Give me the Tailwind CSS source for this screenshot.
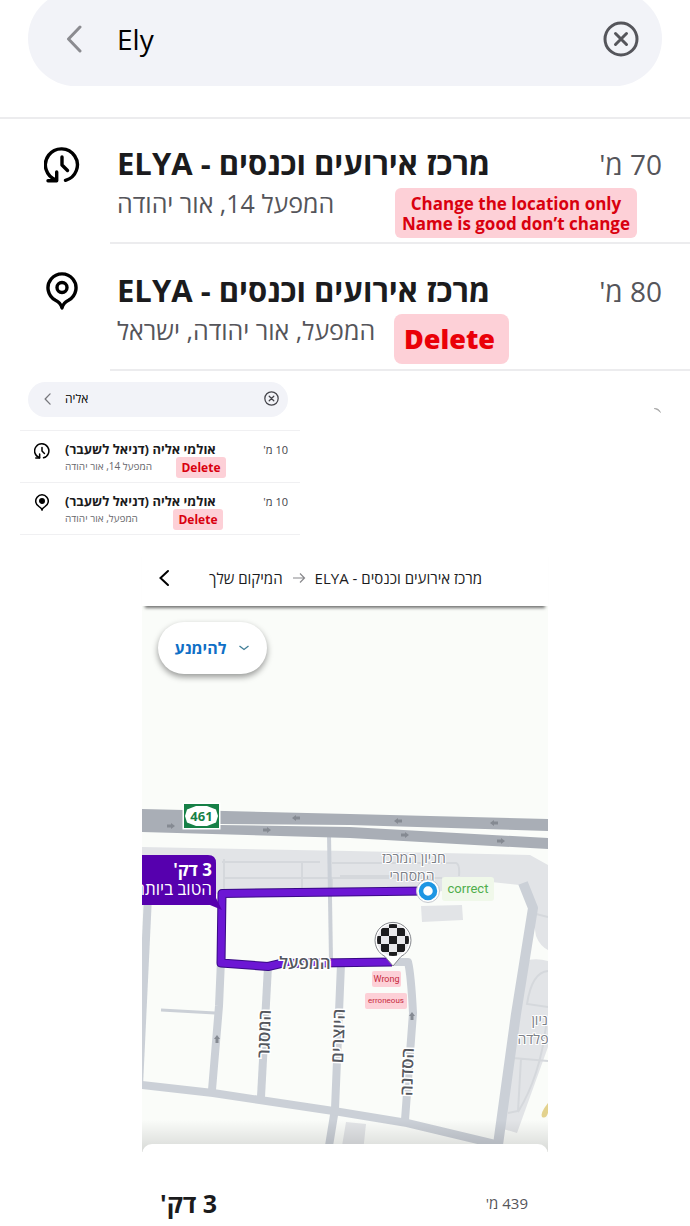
<!DOCTYPE html>
<html lang="he">
<head>
    <meta charset="UTF-8">
    <meta name="viewport" content="width=device-width, initial-scale=1.0">
    <title>ELYA - מרכז אירועים וכנסים</title>
    <script src="https://cdn.jsdelivr.net/npm/@tailwindcss/browser@4"></script>
</head>
<body class="bg-white font-['Open_Sans','Noto_Sans',sans-serif] text-[#1b1b1d] overflow-x-hidden">

    <!-- Shared icons -->
    <svg class="hidden" aria-hidden="true">
        <symbol id="icon-history" viewBox="0 0 36 36">
            <g fill="none" stroke="currentColor" stroke-width="3.4" stroke-linecap="round" stroke-linejoin="round">
                <path d="M12.300 33A16 16 0 1 1 21.500 33.300"/>
                <path d="M4 33.800H12.700V25"/>
                <path d="M18 10V18L23.500 23.500"/>
            </g>
        </symbol>
        <symbol id="icon-clear" viewBox="0 0 36 36">
            <g fill="none" stroke="currentColor" stroke-width="3" stroke-linecap="round">
                <circle cx="18" cy="18" r="16"/>
                <path d="M12.500 12.500L23.500 23.500M23.500 12.500L12.500 23.500"/>
            </g>
        </symbol>
        <symbol id="icon-back" viewBox="0 0 16 28">
            <path d="M14 2L2.500 14L14 26" fill="none" stroke="currentColor" stroke-width="3" stroke-linecap="round" stroke-linejoin="round"/>
        </symbol>
    </svg>

    <!-- Main search -->
    <header class="border-b-2 border-[#ececee] pb-[31px]">
        <div class="-mt-[9px] mx-7 h-[95px] rounded-full bg-[#f2f3f8] flex items-center pl-[38px] pr-[23px]">
            <button type="button" aria-label="חזרה" class="text-[#8b8b90]">
                <svg class="w-4 h-7"><use href="#icon-back"/></svg>
            </button>
            <input type="text" aria-label="חיפוש" value="Ely" class="flex-1 min-w-0 ml-[35px] bg-transparent outline-none text-[28px] leading-9 text-black">
            <button type="button" aria-label="ניקוי" class="text-[#55555b]">
                <svg class="size-9"><use href="#icon-clear"/></svg>
            </button>
        </div>
    </header>

    <main>
        <ul>
            <li class="relative flex h-[125px]">
                <svg class="size-9 mt-7 ml-11 shrink-0 text-black"><use href="#icon-history"/></svg>
                <div class="ml-[30px] flex-1 border-b-2 border-[#ececee] pl-[7px] pr-7 pt-6">
                    <div class="flex items-baseline justify-between whitespace-nowrap">
                        <h2 dir="rtl" class="text-[31px] leading-10 font-bold">מרכז אירועים וכנסים - ELYA</h2>
                        <span dir="rtl" class="text-[28px] leading-10 text-[#55555a]">70 מ'</span>
                    </div>
                    <p dir="rtl" class="text-left text-[25px] leading-[38px] text-[#55555a]">המפעל 14, אור יהודה</p>
                </div>
                <p class="absolute left-[395px] top-[69px] w-[242px] rounded-md bg-[#fdd0d7] pt-[6px] pb-1 text-center text-[17px] leading-5 font-bold text-[#d9000f] whitespace-nowrap">Change the location only<br>Name is good don’t change</p>
            </li>
            <li class="relative flex h-[127px]">
                <svg viewBox="0 0 32 38" class="w-8 h-[38px] mt-7 ml-[46px] shrink-0 text-black" fill="none" stroke="currentColor" stroke-width="3.4" stroke-linejoin="round">
                    <path d="M16 36C15 31.500 13 30 9.500 28.300A14 14 0 1 1 22.500 28.300C19 30 17 31.500 16 36Z"/>
                    <circle cx="16" cy="15.500" r="5"/>
                </svg>
                <div class="ml-8 flex-1 border-b-2 border-[#ececee] pl-[7px] pr-7 pt-[26px]">
                    <div class="flex items-baseline justify-between whitespace-nowrap">
                        <h2 dir="rtl" class="text-[31px] leading-10 font-bold">מרכז אירועים וכנסים - ELYA</h2>
                        <span dir="rtl" class="text-[28px] leading-10 text-[#55555a]">80 מ'</span>
                    </div>
                    <p dir="rtl" class="text-left text-[25px] leading-[38px] text-[#55555a]">המפעל, אור יהודה, ישראל</p>
                </div>
                <p class="absolute left-[394px] top-[70px] w-[115px] rounded-lg bg-[#fdd0d7] py-[5px] pr-1 text-center text-[27px] leading-10 font-extrabold text-[#ea0008]">Delete</p>
            </li>
        </ul>

        <!-- Second search -->
        <section class="relative pt-[11px]">
            <svg viewBox="0 0 10 8" class="absolute right-[28px] top-9 w-[10px] h-2"><path d="M2 1.500C5 1 7.500 2.500 8.500 5.500C6.500 3.500 5 2.200 2 1.500Z" fill="#999" stroke="#aaa" stroke-width=".7"/></svg>
            <div class="ml-5 w-[280px] text-[#1b1b1d]">
                <div class="mx-2 mr-3 h-[35px] rounded-full bg-[#f2f3f8] flex items-center pl-4 pr-[9px] pb-[2px]">
                    <button type="button" aria-label="חזרה" class="text-[#77777c]">
                        <svg class="w-[7px] h-3 block"><use href="#icon-back"/></svg>
                    </button>
                    <input type="text" aria-label="חיפוש" value="אליה" class="flex-1 min-w-0 ml-[14px] bg-transparent outline-none text-xs text-black">
                    <button type="button" aria-label="ניקוי" class="text-[#44444a]">
                        <svg class="size-[15px] block"><use href="#icon-clear"/></svg>
                    </button>
                </div>
                <ul class="mt-[13px] border-t border-[#f0f0f2]">
                    <li class="relative flex h-[52px] border-b border-[#f0f0f2] pl-[14px] pr-3 pt-[9px]">
                        <svg class="size-4 mt-[3px] shrink-0 text-black"><use href="#icon-history"/></svg>
                        <div class="ml-[15px] flex-1">
                            <div class="flex items-baseline justify-between whitespace-nowrap">
                                <h3 dir="rtl" class="text-[13px] leading-[18px] font-bold">אולמי אליה (דניאל לשעבר)</h3>
                                <span dir="rtl" class="text-[11px] leading-[18px] text-[#44444a]">10 מ'</span>
                            </div>
                            <p dir="rtl" class="text-left text-[10px] leading-[14px] text-[#66666b]">המפעל 14, אור יהודה</p>
                        </div>
                        <span class="absolute left-[156px] top-[26px] w-[50px] rounded-[3px] bg-[#fdd0d7] text-center text-xs leading-[21px] font-bold text-[#d9000f]">Delete</span>
                    </li>
                    <li class="relative flex h-[52px] border-b border-[#f0f0f2] pl-[14px] pr-3 pt-[9px]">
                        <svg viewBox="0 0 32 38" class="w-4 h-[17px] mt-[2px] shrink-0 text-black" fill="none" stroke="currentColor" stroke-width="3.400" stroke-linejoin="round">
                            <path d="M16 36C15 31.500 13 30 9.500 28.300A14 14 0 1 1 22.500 28.300C19 30 17 31.500 16 36Z"/>
                            <circle cx="16" cy="15.500" r="5" fill="currentColor"/>
                        </svg>
                        <div class="ml-[15px] flex-1">
                            <div class="flex items-baseline justify-between whitespace-nowrap">
                                <h3 dir="rtl" class="text-[13px] leading-[18px] font-bold">אולמי אליה (דניאל לשעבר)</h3>
                                <span dir="rtl" class="text-[11px] leading-[18px] text-[#44444a]">10 מ'</span>
                            </div>
                            <p dir="rtl" class="text-left text-[10px] leading-[14px] text-[#66666b]">המפעל, אור יהודה</p>
                        </div>
                        <span class="absolute left-[153px] top-[26px] w-[50px] rounded-[3px] bg-[#fdd0d7] text-center text-xs leading-[21px] font-bold text-[#d9000f]">Delete</span>
                    </li>
                </ul>
            </div>
        </section>

        <!-- Route preview -->
        <section class="mx-auto mt-[15px] w-full max-w-[406px]">
            <div class="relative z-10 flex h-14 items-center pl-4 text-[15px] shadow-[0_5px_3px_-3px_rgba(0,0,0,0.55)] bg-white whitespace-nowrap">
                <button type="button" aria-label="חזרה" class="text-black">
                    <svg viewBox="0 0 12 18" class="w-3 h-[18px] block"><path d="M10 2L2.500 9L10 16" fill="none" stroke="currentColor" stroke-width="2" stroke-linecap="round"/></svg>
                </button>
                <span dir="rtl" class="ml-[39px]">המיקום שלך</span>
                <svg viewBox="0 0 14 12" class="mx-[9px] w-[14px] h-3" fill="none" stroke="#88888c" stroke-width="1.200"><path d="M1 6H12.500M8 1.500L12.500 6L8 10.500"/></svg>
                <span dir="rtl">מרכז אירועים וכנסים - ELYA</span>
            </div>

            <div class="relative">
                <svg viewBox="0 0 406 546" class="block w-full bg-[#fafcf9]" font-family="'Open Sans', sans-serif">
                    <defs>
                        <linearGradient id="sheet-shade" x1="0" y1="0" x2="0" y2="1">
                            <stop offset="0" stop-color="#000" stop-opacity="0"/>
                            <stop offset="1" stop-color="#000" stop-opacity=".14"/>
                        </linearGradient>
                        <clipPath id="checker"><circle cx="251" cy="334" r="16"/></clipPath>
                        <path id="lane" d="M-4 0L0 -3V-1.500H4V1.500H0V3Z"/>
                    </defs>

                    <!-- parking lots and buildings -->
                    <g fill="#e2e4e7">
                        <path d="M0 241L208 245L388 249L406 259V344Q398 340 394 330L386 280L340 275L296 286L80 287L0 299Z"/>
                        <path d="M386 354Q396 352 406 355V441L375 527L358 522Z"/>
                        <path d="M279 300L320 299L321 314L280 316Z"/>
                        <path d="M204 516L224 518L221 546L199 546Z"/>
                    </g>
                    <g fill="none" stroke="#d5d8dc" stroke-width="2">
                        <path d="M80 256H178M82 272H300M160 256V286M82 253V286M190 257H314Q318 258 317 270M190 272V286M198 270H290"/>
                        <path d="M394 308L406 311M406 365Q390 366 385 398L406 401M371 452L406 455M379 453L376 505L366 507M404 420Q398 470 376 506"/>
                    </g>

                    <!-- streets -->
                    <g fill="none" stroke="#cbd0d7" stroke-width="8" stroke-linejoin="round">
                        <path d="M6 290L-3 480"/>
                        <path d="M79 354L77 400L70 484"/>
                        <path d="M126 360L119 491"/>
                        <path d="M199 358L193 503L186 546"/>
                        <path d="M251 356H266Q269 368 271 407L263 514"/>
                        <path d="M0 479L71 487L198 506L265 517L353 538"/>
                        <path d="M381 277L391 302L374 408L355 546" stroke-width="10"/>
                        <path d="M187 228L189 355" stroke-width="4"/>
                        <path d="M19 404L73 407" stroke-width="3"/>
                    </g>
                    <path d="M406 497Q398 507 400 511Q404 513 406 507Z" fill="#e3d28e"/>

                    <!-- highway -->
                    <g fill="#a9aeb6">
                        <path d="M0 203L208 208L406 213V225L208 219L78 218H0Z"/>
                        <path d="M0 217L78 219L208 221L406 232V243L208 232L0 226Z"/>
                    </g>
                    <path d="M0 215H78V221H0Z" fill="#a9aeb6"/>
                    <g fill="#858a92">
                        <use href="#lane" x="154" y="212"/>
                        <use href="#lane" x="256" y="215"/>
                        <use href="#lane" x="352" y="217"/>
                        <use href="#lane" transform="translate(29 220) rotate(180)"/>
                        <use href="#lane" transform="translate(125 224) rotate(180)"/>
                        <use href="#lane" transform="translate(263 229) rotate(180)"/>
                        <use href="#lane" transform="translate(359 235) rotate(180)"/>
                        <use href="#lane" transform="translate(75 433) rotate(90)"/>
                        <use href="#lane" transform="translate(270 410) rotate(90)"/>
                    </g>
                    <rect x="40.500" y="196.500" width="38" height="27" fill="#fff"/>
                    <rect x="42" y="198" width="35" height="24" fill="#178047"/>
                    <path d="M45 203.500L54 200H65L74 203.500L76 210L74 216.500L65 220H54L45 216.500L43 210Z" fill="#fff"/>
                    <text x="59.500" y="215" text-anchor="middle" font-size="13" font-weight="700" fill="#178047">461</text>

                    <!-- route -->
                    <g fill="none" stroke-linejoin="round">
                        <path d="M286 285L80 287.500L79 357L126 360.500L139 357.500L250 356" stroke="#390a85" stroke-width="9"/>
                        <path d="M286 285L80 287.500L79 357L126 360.500L139 357.500L250 356" stroke="#6c17d4" stroke-width="7"/>
                    </g>
                    <path d="M0 249H66Q74 249 74 257V292L80 304L68 299H0Z" fill="#5600ae"/>
                    <g fill="#fff" font-size="17" direction="rtl">
                        <text x="70" y="270" font-weight="700">3 דק'</text>
                        <text x="70" y="289">הטוב ביותר</text>
                    </g>

                    <!-- place and street names -->
                    <g font-size="14" fill="#7c8087" stroke="#fff" stroke-width="2" paint-order="stroke" text-anchor="middle" direction="rtl">
                        <text x="272" y="257">חניון המרכז</text>
                        <text x="270" y="275">המסחרי</text>
                        <text x="402" y="419">חניון</text>
                        <text x="391" y="438">פלדה</text>
                    </g>
                    <g font-size="17" font-weight="600" fill="#54575e" stroke="#fff" stroke-width="3" paint-order="stroke" text-anchor="middle" direction="rtl">
                        <text x="163" y="363">המפעל</text>
                        <text transform="translate(128 428) rotate(-88)">המסגר</text>
                        <text transform="translate(202 430) rotate(-88)">היוצרים</text>
                        <text transform="translate(271 466) rotate(-88)">הסדנה</text>
                    </g>

                    <!-- start -->
                    <circle cx="286" cy="285" r="11.500" fill="#fff" stroke="#c5c8cd" stroke-width="1"/>
                    <circle cx="286" cy="285" r="7" fill="#fff" stroke="#1e96e3" stroke-width="4.500"/>

                    <!-- destination -->
                    <path d="M251 360L243 350.500A18 18 0 1 1 259 350.500Z" fill="#fff" stroke="#85888d" stroke-width="1"/>
                    <g clip-path="url(#checker)">
                        <rect x="235" y="318" width="32" height="32" fill="#e9e9ec"/>
                        <path d="M247 315h8v7h-8zM239 322h8v8h-8zM255 322h8v8h-8zM231 330h8v8h-8zM247 330h8v8h-8zM263 330h8v8h-8zM239 338h8v8h-8zM255 338h8v8h-8zM247 346h8v7h-8z" fill="#1d1d1f"/>
                    </g>

                    <rect y="514" width="406" height="32" fill="url(#sheet-shade)"/>
                </svg>

                <button type="button" class="absolute left-4 top-4 flex h-[52px] w-[109px] items-center justify-center gap-3 rounded-full bg-white text-base font-bold text-[#0f6fc6] shadow-[0_3px_6px_rgba(0,0,0,0.4)]">
                    <span dir="rtl">להימנע</span>
                    <svg viewBox="0 0 12 8" class="w-3 h-2" fill="none" stroke="#3f7d96" stroke-width="1.300"><path d="M1.500 2L6 5.500L10.500 2"/></svg>
                </button>
                <span class="absolute left-[300px] top-[271px] w-[52px] rounded-[3px] bg-[#f0f8ea] text-center font-['Roboto',sans-serif] text-[13px] leading-6 text-[#4fae4c]">correct</span>
                <span class="absolute left-[230px] top-[365px] w-[29px] rounded-[2px] bg-[#fdd0d7] text-center font-['Roboto',sans-serif] text-[9px] leading-4 text-[#c62a3d]">Wrong</span>
                <span class="absolute left-[223px] top-[387px] w-[42px] rounded-[2px] bg-[#fdd0d7] text-center font-['Roboto',sans-serif] text-[8px] leading-4 text-[#c62a3d]">erroneous</span>
            </div>

            <div class="relative -mt-2 flex h-[83px] items-end justify-between rounded-t-[10px] bg-white pl-[18px] pb-1 pr-5">
                <strong dir="rtl" class="text-[25px] leading-10">3 דק'</strong>
                <span dir="rtl" class="text-[15px] leading-10 text-[#55555a]">439 מ'</span>
            </div>
        </section>
    </main>
</body>
</html>
